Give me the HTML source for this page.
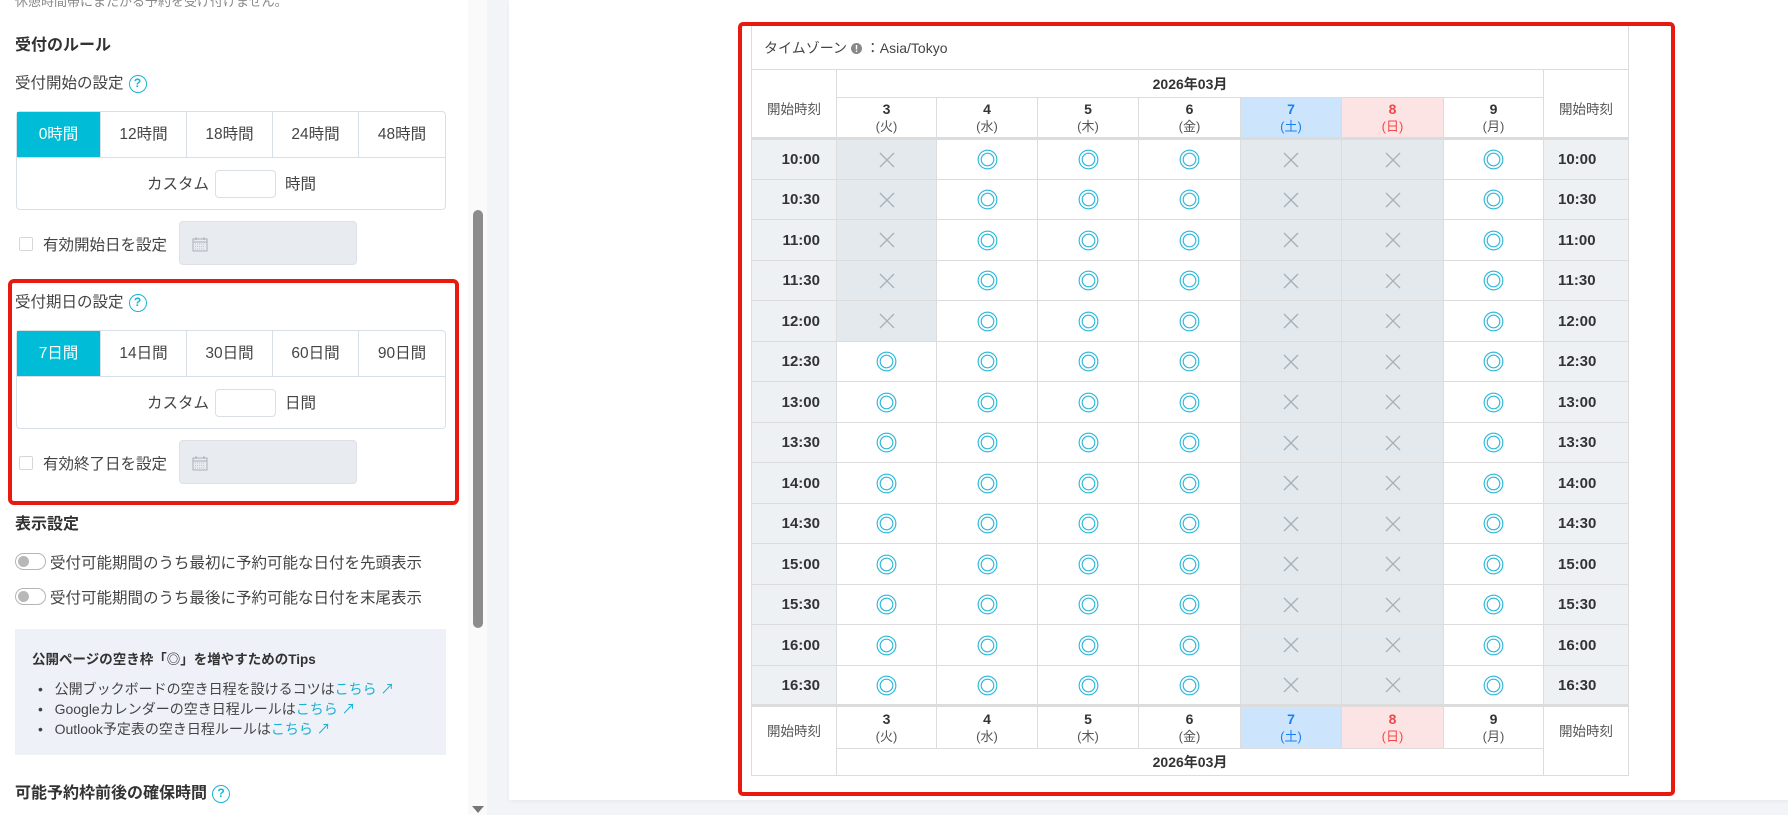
<!DOCTYPE html>
<html><head><meta charset="utf-8">
<style>
*{box-sizing:border-box;margin:0;padding:0}
body{width:1788px;height:815px;overflow:hidden;background:#f3f4f8;font-family:"Liberation Sans","Noto Sans CJK JP",sans-serif;color:#333;position:relative}
.a{position:absolute;white-space:nowrap}
#left{position:absolute;left:0;top:0;width:468px;height:815px;background:#fff}
#track{position:absolute;left:468px;top:0;width:19px;height:815px;background:#fafafa}
#thumb{position:absolute;left:473px;top:210px;width:10px;height:418px;background:#8c8c8c;border-radius:5px}
#card{position:absolute;left:509px;top:0;width:1279px;height:800px;background:#fff;box-shadow:0 2px 4px rgba(0,0,0,.04)}
.h{font-weight:bold;font-size:16px}
.l{font-size:15.5px;color:#444}
.help{display:inline-block;width:18px;height:18px;border:1.6px solid #19b5d2;border-radius:50%;color:#19b5d2;font-size:12px;font-weight:bold;text-align:center;line-height:15px;vertical-align:middle;margin-left:5px}
.grp{position:absolute;left:16px;width:430px;border:1px solid #d9dfe8;border-radius:4px;background:#fff}
.grp .row{display:flex;height:46px;border-bottom:1px solid #d9dfe8}
.grp .row div{flex:0 0 auto;border-right:1px solid #d9dfe8;text-align:center;line-height:45px;font-size:15.5px;color:#444}
.grp .row div:last-child{border-right:none}
.grp .row div.on{background:#00bcd6;color:#fff}
.grp .cus{height:51px;position:relative}
.inp{position:absolute;left:198px;top:12px;width:61px;height:28px;border:1px solid #d9dfe8;border-radius:4px}
.cb{position:absolute;width:14px;height:14px;border:1px solid #d6d6d6;border-radius:2px;background:#fff}
.date{position:absolute;left:179px;width:178px;height:44px;background:#e8ebef;border:1px solid #dde1e6;border-radius:4px}
.tg{position:absolute;left:15px;width:31px;height:17px;border:1px solid #b5b5b5;border-radius:9px;background:#fff}
.tg:after{content:"";position:absolute;left:2px;top:2px;width:11px;height:11px;border-radius:50%;background:#b8b8b8}
.red{position:absolute;border:4px solid #e8190f;border-radius:6px}
table{position:absolute;left:751px;top:25px;width:877px;border-collapse:collapse;table-layout:fixed}
td{border:1px solid #dcdcdc;text-align:center;padding:0;font-size:14px}
.tm{background:#eef1f4;font-weight:bold;font-size:15px;color:#333}
.tl{text-align:right;padding-right:16px}
.tr{text-align:left;padding-left:14px}
.x{background:#e3e9ed}
.dh{line-height:17px}
.dh b{font-size:14px;color:#333}
.dh span{font-size:13px;color:#555}
.sat{background:#cde5fc}.sat b,.sat span{color:#1a7ff0}
.sun{background:#fde4e4}.sun b,.sun span{color:#f04848}
.lab{font-size:13.5px;color:#555}
.lt{vertical-align:top;padding-top:28px}
.lf{vertical-align:top;padding-top:13px}
td svg{display:block;margin:0 auto}
</style></head><body>
<div id="left">
 <div class="a" style="left:15px;top:-9px;font-size:13px;color:#888">休憩時間帯にまたがる予約を受け付けません。</div>
 <div class="a h" style="left:15px;top:31px">受付のルール</div>
 <div class="a l" style="left:15px;top:71px">受付開始の設定<span class="help">?</span></div>
 <div class="grp" style="top:111px">
  <div class="row"><div class="on" style="width:84px">0時間</div><div style="width:86px">12時間</div><div style="width:86px">18時間</div><div style="width:86px">24時間</div><div style="width:86px">48時間</div></div>
  <div class="cus"><div class="a l" style="left:130px;top:14px">カスタム</div><div class="inp"></div><div class="a l" style="left:268px;top:14px">時間</div></div>
 </div>
 <div class="cb" style="left:19px;top:237px"></div>
 <div class="a l" style="left:43px;top:233px">有効開始日を設定</div>
 <div class="date" style="top:221px"><svg class="a" style="left:12px;top:14px" width="16" height="16" viewBox="0 0 16 16"><rect x="1" y="3" width="14" height="12" fill="none" stroke="#a9b0b8"/><path d="M1 6h14M4 1v3M12 1v3" stroke="#a9b0b8"/><path d="M3 8h10M3 10.5h10M3 13h10" stroke="#c0c6cc" stroke-dasharray="1 1"/></svg></div>

 <div class="a l" style="left:15px;top:290px">受付期日の設定<span class="help">?</span></div>
 <div class="grp" style="top:330px">
  <div class="row"><div class="on" style="width:84px">7日間</div><div style="width:86px">14日間</div><div style="width:86px">30日間</div><div style="width:86px">60日間</div><div style="width:86px">90日間</div></div>
  <div class="cus"><div class="a l" style="left:130px;top:14px">カスタム</div><div class="inp"></div><div class="a l" style="left:268px;top:14px">日間</div></div>
 </div>
 <div class="cb" style="left:19px;top:456px"></div>
 <div class="a l" style="left:43px;top:452px">有効終了日を設定</div>
 <div class="date" style="top:440px"><svg class="a" style="left:12px;top:14px" width="16" height="16" viewBox="0 0 16 16"><rect x="1" y="3" width="14" height="12" fill="none" stroke="#a9b0b8"/><path d="M1 6h14M4 1v3M12 1v3" stroke="#a9b0b8"/><path d="M3 8h10M3 10.5h10M3 13h10" stroke="#c0c6cc" stroke-dasharray="1 1"/></svg></div>
 <div class="red" style="left:8px;top:279px;width:451px;height:226px"></div>

 <div class="a h" style="left:15px;top:510px">表示設定</div>
 <div class="tg" style="top:553px"></div>
 <div class="a l" style="left:50px;top:551px">受付可能期間のうち最初に予約可能な日付を先頭表示</div>
 <div class="tg" style="top:588px"></div>
 <div class="a l" style="left:50px;top:586px">受付可能期間のうち最後に予約可能な日付を末尾表示</div>

 <div class="a" style="left:15px;top:629px;width:431px;height:126px;background:#eef1f8"></div>
 <div class="a" style="left:32px;top:648px;font-size:13.5px;font-weight:bold;color:#333">公開ページの空き枠「◎」を増やすためのTips</div>
 <div class="a" style="left:38px;top:679px;font-size:14px;line-height:20px;color:#444">
  <div>•&nbsp;&nbsp;&nbsp;公開ブックボードの空き日程を設けるコツは<span style="color:#1cb1d2">こちら ↗</span></div>
  <div>•&nbsp;&nbsp;&nbsp;Googleカレンダーの空き日程ルールは<span style="color:#1cb1d2">こちら ↗</span></div>
  <div>•&nbsp;&nbsp;&nbsp;Outlook予定表の空き日程ルールは<span style="color:#1cb1d2">こちら ↗</span></div>
 </div>
 <div class="a h" style="left:15px;top:779px">可能予約枠前後の確保時間<span class="help">?</span></div>
</div>
<div id="track"></div><div id="thumb"></div>
<div class="a" style="left:472px;top:806px;width:0;height:0;border-left:6px solid transparent;border-right:6px solid transparent;border-top:7px solid #777"></div>

<div id="card"></div>
<svg width="0" height="0" style="position:absolute"><defs>
<symbol id="o" viewBox="0 0 22 22"><circle cx="11" cy="11" r="9.8" fill="none" stroke="#2bb7d8" stroke-width="1.2"/><circle cx="11" cy="11" r="6.6" fill="none" stroke="#2bb7d8" stroke-width="1.2"/></symbol>
<symbol id="x" viewBox="0 0 16 16"><path d="M1 1L15 15M15 1L1 15" stroke="#a5b0b8" stroke-width="1.3"/></symbol>
</defs></svg>
<table id="t">
<colgroup><col style="width:85px"><col style="width:100px"><col style="width:101px"><col style="width:101px"><col style="width:102px"><col style="width:101px"><col style="width:102px"><col style="width:100px"><col style="width:85px"></colgroup>
<tr style="height:44px"><td colspan="9" style="text-align:left;padding-left:12px;font-size:14px;color:#444">タイムゾーン <svg style="display:inline-block;vertical-align:-1px;margin:0" width="11" height="11" viewBox="0 0 11 11"><circle cx="5.5" cy="5.5" r="5.5" fill="#888"/><rect x="4.8" y="2" width="1.4" height="4.5" fill="#fff"/><rect x="4.8" y="7.5" width="1.4" height="1.4" fill="#fff"/></svg> ：Asia/Tokyo</td></tr>
<tr style="height:28px"><td rowspan="2" class="lab lt">開始時刻</td><td colspan="7" style="font-weight:bold;font-size:14px">2026年03月</td><td rowspan="2" class="lab lt">開始時刻</td></tr>
<tr style="height:41px;border-bottom:3px solid #dcdcdc">
<td class="dh"><b>3</b><br><span>(火)</span></td><td class="dh"><b>4</b><br><span>(水)</span></td><td class="dh"><b>5</b><br><span>(木)</span></td><td class="dh"><b>6</b><br><span>(金)</span></td><td class="dh sat"><b>7</b><br><span>(土)</span></td><td class="dh sun"><b>8</b><br><span>(日)</span></td><td class="dh"><b>9</b><br><span>(月)</span></td></tr>
<tbody id="body"></tbody>
<tr style="height:43px;border-top:3px solid #dcdcdc"><td rowspan="2" class="lab lf">開始時刻</td>
<td class="dh"><b>3</b><br><span>(火)</span></td><td class="dh"><b>4</b><br><span>(水)</span></td><td class="dh"><b>5</b><br><span>(木)</span></td><td class="dh"><b>6</b><br><span>(金)</span></td><td class="dh sat"><b>7</b><br><span>(土)</span></td><td class="dh sun"><b>8</b><br><span>(日)</span></td><td class="dh"><b>9</b><br><span>(月)</span></td><td rowspan="2" class="lab lf">開始時刻</td></tr>
<tr style="height:27px"><td colspan="7" style="font-weight:bold;font-size:14px">2026年03月</td></tr>
</table>
<script>
var times=["10:00","10:30","11:00","11:30","12:00","12:30","13:00","13:30","14:00","14:30","15:00","15:30","16:00","16:30"];
var h="",O='<svg width="21" height="21"><use href="#o"/></svg>',X='<svg width="16" height="16"><use href="#x"/></svg>';
times.forEach(function(t,i){
 h+='<tr style="height:'+(i%2?40:41)+'px"><td class="tm tl">'+t+'</td>';
 h+=i<5?'<td class="x">'+X+'</td>':'<td>'+O+'</td>';
 h+='<td>'+O+'</td><td>'+O+'</td><td>'+O+'</td><td class="x">'+X+'</td><td class="x">'+X+'</td><td>'+O+'</td>';
 h+='<td class="tm tr">'+t+'</td></tr>';
});
document.getElementById("body").innerHTML=h;
</script>
<div class="red" style="left:738px;top:22px;width:937px;height:774px;border-radius:5px"></div>
</body></html>
